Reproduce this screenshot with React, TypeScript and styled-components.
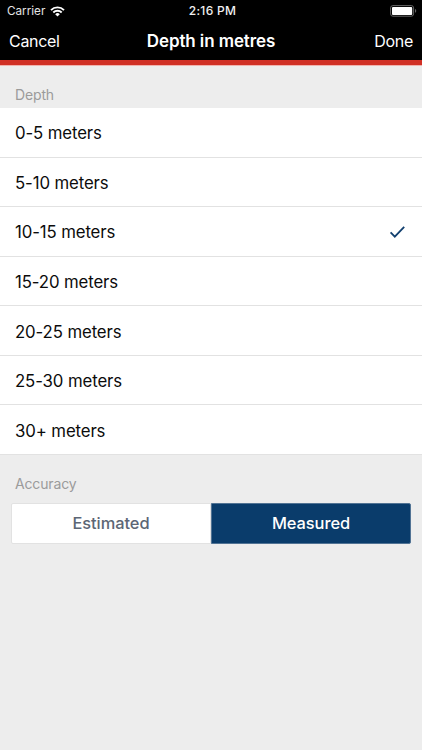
import React from 'react';
import styled, { createGlobalStyle } from 'styled-components';

const GlobalStyle = createGlobalStyle`
  * { box-sizing: border-box; }
  body { margin: 0; background: #ededed; }
`;

const Screen = styled.div`
  width: 100%;
  height: 750px;
  overflow: hidden;
  background: #ededed;
  font-family: Inter, "Liberation Sans", sans-serif;
  display: flex;
  flex-direction: column;
`;

const Header = styled.header`
  flex: none;
  height: 66px;
  background: linear-gradient(#000 60px, #d03025 60px, #d03025 65px, #f0b3ae 65px);
  color: #fff;
`;

const StatusBar = styled.div`
  height: 22px;
  padding: 0 5px 0 7px;
  display: grid;
  grid-template-columns: 1fr auto 1fr;
  align-items: center;
  font-size: 11.7px;
  line-height: 22px;
`;

const Carrier = styled.div`
  display: flex;
  align-items: center;
  gap: 5px;
  letter-spacing: 0;
  color: #e4e4e4;
`;

const Clock = styled.div`
  font-weight: 500;
  font-size: 12px;
  letter-spacing: 0.3px;
  padding-left: 1px;
  color: #f0f0f0;
`;

const Battery = styled.div`
  display: flex;
  justify-content: flex-end;
`;

const NavBar = styled.nav`
  height: 38px;
  padding: 0 9px 0 9px;
  display: grid;
  grid-template-columns: 1fr auto 1fr;
  align-items: center;
`;

const NavButton = styled.button<{ $end?: boolean }>`
  border: 0;
  padding: 0;
  background: none;
  color: #fff;
  font: 400 16px/38px Inter, sans-serif;
  letter-spacing: -0.3px;
  text-align: ${(p) => (p.$end ? 'right' : 'left')};
`;

const Title = styled.h1`
  margin: 0;
  font-size: 17px;
  font-weight: 600;
  line-height: 38px;
  letter-spacing: -0.1px;
`;

const SectionLabel = styled.h2<{ $height: number }>`
  flex: none;
  margin: 0;
  height: ${(p) => p.$height}px;
  padding: 19px 15px 0;
  color: #9b9b9b;
  font-size: 14px;
  line-height: 20px;
  font-weight: 400;
  letter-spacing: -0.15px;
`;

const List = styled.ul`
  flex: none;
  margin: 0;
  padding: 0;
  list-style: none;
  background: #fff;
`;

const Row = styled.li`
  height: 49.57px;
  padding: 2px 16px 0 15px;
  display: flex;
  align-items: center;
  justify-content: space-between;
  border-bottom: 1px solid #e2e2e2;
  color: #0b0b0b;
  font-size: 16.8px;
  letter-spacing: -0.12px;
`;

const Segments = styled.div`
  flex: none;
  height: 41px;
  margin: 0 11px;
  display: grid;
  grid-template-columns: 1fr 1fr;
`;

const Segment = styled.button<{ $active?: boolean }>`
  padding: 0;
  border: 1px solid ${(p) => (p.$active ? '#517394' : '#e2e2e2')};
  border-radius: ${(p) => (p.$active ? '0 2px 2px 0' : '2px 0 0 2px')};
  background: ${(p) => (p.$active ? '#0a3c6b' : '#fff')};
  color: ${(p) => (p.$active ? '#fff' : '#5c6675')};
  font: 500 16.4px/38px Inter, sans-serif;
  letter-spacing: -0.05px;
`;

const depths = ['0-5', '5-10', '10-15', '15-20', '20-25', '25-30', '30+'];

const WifiIcon = () => (
  <svg width="15" height="11" viewBox="0 0 15 11" fill="none" stroke="#fff" strokeWidth="1.9">
    <path d="M1 4.1a9.2 9.2 0 0 1 13 0" />
    <path d="M3.3 6.5a6 6 0 0 1 8.4 0" />
    <path d="M7.5 10.6 5.2 8.2a3.3 3.3 0 0 1 4.6 0Z" fill="#fff" stroke="none" />
  </svg>
);

const BatteryIcon = () => (
  <svg width="27" height="12" viewBox="0 0 27 12">
    <rect x="0.6" y="0.6" width="23" height="10.6" rx="2.3" fill="none" stroke="#666" />
    <rect x="2" y="2" width="20.2" height="7.9" rx="1" fill="#fff" />
    <path d="M25 4.1v3.6c.7-.3 1.2-1 1.2-1.8s-.5-1.5-1.2-1.8Z" fill="#666" />
  </svg>
);

const CheckIcon = () => (
  <svg width="17" height="14" viewBox="0 0 17 14" fill="none" stroke="#12406f" strokeWidth="1.8">
    <path d="M1.6 7.3 5.8 11.6 15.2 1.9" />
  </svg>
);

export default function App() {
  return (
    <Screen>
      <GlobalStyle />
      <Header>
        <StatusBar>
          <Carrier>Carrier <WifiIcon /></Carrier>
          <Clock>2:16 PM</Clock>
          <Battery><BatteryIcon /></Battery>
        </StatusBar>
        <NavBar>
          <NavButton>Cancel</NavButton>
          <Title>Depth in metres</Title>
          <NavButton $end>Done</NavButton>
        </NavBar>
      </Header>
      <SectionLabel $height={42}>Depth</SectionLabel>
      <List>
        {depths.map((depth) => (
          <Row key={depth}>
            {depth} meters
            {depth === '10-15' && <CheckIcon />}
          </Row>
        ))}
      </List>
      <SectionLabel $height={48}>Accuracy</SectionLabel>
      <Segments>
        <Segment>Estimated</Segment>
        <Segment $active>Measured</Segment>
      </Segments>
    </Screen>
  );
}
